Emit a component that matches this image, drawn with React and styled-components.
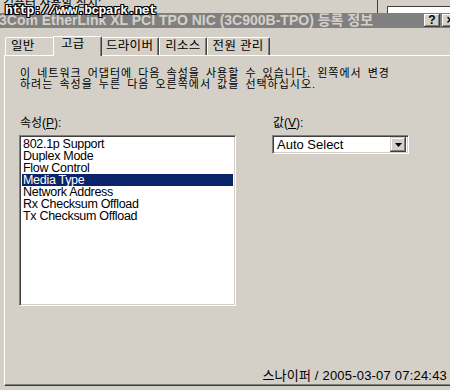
import React from "react";
import styled, { createGlobalStyle } from "styled-components";

const Global = createGlobalStyle`
  html, body { margin: 0; padding: 0; background: #d4d0c8; }
  body { font-family: "Liberation Sans", "Noto Sans CJK KR", sans-serif; }
`;

const KR = `"Liberation Sans", "Noto Sans CJK KR", sans-serif`;

const Screen = styled.div`
  position: relative;
  width: 450px;
  height: 390px;
  overflow: hidden;
  background: #d4d0c8;
  display: flex;
  flex-direction: column;
`;

const BackStrip = styled.div`
  height: 13px;
  position: relative;
  display: flex;
  align-items: flex-end;
  font-family: ${KR};
  font-size: 12px;
  color: #000;
  overflow: hidden;
`;

const BackLabel = styled.span`
  margin-left: 3px;
  line-height: 12px;
  transform: translateY(-4px);
`;

const BackFrame = styled.div`
  position: absolute;
  top: -2px;
  left: 377px;
  width: 100px;
  height: 20px;
  border-left: 1px solid #404040;
  &::after {
    content: "";
    position: absolute;
    left: 9px;
    top: 8px;
    width: 100px;
    height: 20px;
    border-left: 1px solid #404040;
    border-top: 1px solid #404040;
    background: #fff;
  }
`;

const Watermark = styled.div`
  position: absolute;
  left: 5px;
  top: 3px;
  font-family: "Liberation Mono", monospace;
  font-weight: bold;
  font-size: 13px;
  letter-spacing: -0.6px;
  color: #fff;
  text-shadow: 1px 0 0 #000, -1px 0 0 #000, 0 1px 0 #000, 0 -1px 0 #000,
    1px 1px 0 #000, -1px -1px 0 #000, 1px -1px 0 #000, -1px 1px 0 #000;
  z-index: 5;
`;

const TitleBar = styled.div`
  height: 15px;
  background: #808080;
  display: flex;
  align-items: center;
  justify-content: space-between;
`;

const TitleText = styled.span`
  font-family: "Liberation Sans", "Noto Sans CJK KR", sans-serif;
  font-weight: bold;
  font-size: 14px;
  letter-spacing: 0px;
  color: #d4d0c8;
  margin-left: -1px;
  white-space: nowrap;
  line-height: 15px;
`;

const TitleButtons = styled.div`
  display: flex;
  gap: 2px;
  margin-right: -8px;
`;

const CapButton = styled.div`
  width: 16px;
  height: 13px;
  background: #d4d0c8;
  box-shadow: inset -1px -1px 0 #404040, inset 1px 1px 0 #fff, inset -2px -2px 0 #808080;
  display: flex;
  align-items: center;
  justify-content: center;
  font-family: "Liberation Sans", sans-serif;
  font-weight: bold;
  font-size: 12px;
  color: #000;
  line-height: 13px;
`;

const TabStrip = styled.div`
  height: 27px;
  display: flex;
  align-items: flex-end;
  padding-left: 5px;
  position: relative;
  z-index: 1;
`;

const Tab = styled.div`
  box-sizing: border-box;
  height: ${(p) => (p.$active ? 20 : 18)}px;
  min-width: ${(p) => p.$min || 0}px;
  margin: 0 ${(p) => (p.$active ? -2 : 0)}px ${(p) => (p.$active ? -1 : 0)}px;
  padding: 0 5px 0 ${(p) => (p.$active ? 7 : 5)}px;
  border-left: 1px solid #fff;
  border-top: 1px solid #fff;
  border-right: 1px solid #404040;
  border-radius: 2px 2px 0 0;
  box-shadow: inset -1px 0 0 #808080;
  background: #d4d0c8;
  position: relative;
  z-index: ${(p) => (p.$active ? 2 : 1)};
  font-family: ${KR};
  font-size: 12.5px;
  letter-spacing: 0.3px;
  line-height: ${(p) => (p.$active ? 15 : 16)}px;
  color: #000;
  white-space: nowrap;
`;

const Panel = styled.div`
  height: 331px;
  box-sizing: border-box;
  margin-left: 4px;
  border-left: 1px solid #fff;
  border-top: 1px solid #fff;
  border-bottom: 1px solid #404040;
  box-shadow: inset 0 -1px 0 #808080;
  display: flex;
  flex-direction: column;
  padding: 12px 0 0 15px;
  font-family: ${KR};
  font-size: 12px;
  color: #000;
`;

const Description = styled.p`
  margin: 0;
  font-size: 11px;
  line-height: 11px;
  letter-spacing: 1px;
  word-spacing: 2px;
`;

const Columns = styled.div`
  margin-top: 27px;
  display: grid;
  grid-template-columns: 217px 137px;
  column-gap: 36px;
  margin-left: -1px;
`;

const Field = styled.div`
  display: flex;
  flex-direction: column;
`;

const Label = styled.div`
  line-height: 12px;
  margin: 0 0 6px 1px;
  u { text-decoration: underline; }
`;

const ListBox = styled.div`
  box-sizing: border-box;
  height: 171px;
  background: #fff;
  border-top: 1px solid #808080;
  border-left: 1px solid #808080;
  border-right: 1px solid #fff;
  border-bottom: 1px solid #fff;
  box-shadow: inset 1px 1px 0 #404040, inset -1px -1px 0 #d4d0c8;
  padding: 2px 2px 0 2px;
  display: flex;
  flex-direction: column;
`;

const Item = styled.div`
  height: 12px;
  line-height: 12px;
  padding-left: 1px;
  font-family: "Liberation Sans", sans-serif;
  font-size: 12.5px;
  letter-spacing: -0.3px;
  background: ${(p) => (p.$sel ? "#0a246a" : "transparent")};
  color: ${(p) => (p.$sel ? "#fff" : "#000")};
  white-space: nowrap;
  overflow: hidden;
`;

const Combo = styled.div`
  box-sizing: border-box;
  height: 19px;
  background: #fff;
  border-top: 1px solid #808080;
  border-left: 1px solid #808080;
  border-right: 1px solid #fff;
  border-bottom: 1px solid #fff;
  box-shadow: inset 1px 1px 0 #404040, inset -1px -1px 0 #d4d0c8;
  display: flex;
  align-items: center;
  padding: 2px;
`;

const ComboValue = styled.div`
  flex: 1;
  padding-left: 2px;
  font-family: "Liberation Sans", sans-serif;
  font-size: 13px;
  line-height: 13px;
`;

const DropButton = styled.div`
  width: 16px;
  height: 15px;
  box-sizing: border-box;
  background: #d4d0c8;
  box-shadow: inset -1px -1px 0 #404040, inset 1px 1px 0 #d4d0c8, inset -2px -2px 0 #808080, inset 2px 2px 0 #fff;
  display: flex;
  align-items: center;
  justify-content: center;
`;

const Footer = styled.div`
  margin-top: auto;
  margin-bottom: 3px;
  align-self: flex-end;
  margin-right: 3px;
  font-family: ${KR};
  font-size: 13px;
  line-height: 13px;
  color: #000;
  letter-spacing: 0.2px;
`;

const items = [
  "802.1p Support",
  "Duplex Mode",
  "Flow Control",
  "Media Type",
  "Network Address",
  "Rx Checksum Offload",
  "Tx Checksum Offload",
];

export default function App() {
  return (
    <>
      <Global />
      <Screen>
        <Watermark>http://www.bcpark.net</Watermark>
        <BackStrip>
          <BackLabel>컴퓨터 사용할 장치:</BackLabel>
          <BackFrame />
        </BackStrip>
        <TitleBar>
          <TitleText>3Com EtherLink XL PCI TPO NIC (3C900B-TPO) 등록 정보</TitleText>
          <TitleButtons>
            <CapButton>?</CapButton>
            <CapButton>×</CapButton>
          </TitleButtons>
        </TitleBar>
        <TabStrip>
          <Tab $min={50}>일반</Tab>
          <Tab $active $min={49}>고급</Tab>
          <Tab>드라이버</Tab>
          <Tab>리소스</Tab>
          <Tab>전원 관리</Tab>
        </TabStrip>
        <Panel>
          <Description>
            이 네트워크 어댑터에 다음 속성을 사용할 수 있습니다. 왼쪽에서 변경
            <br />
            하려는 속성을 누른 다음 오른쪽에서 값을 선택하십시오.
          </Description>
          <Columns>
            <Field>
              <Label>
                속성(<u>P</u>):
              </Label>
              <ListBox>
                {items.map((t) => (
                  <Item key={t} $sel={t === "Media Type"}>
                    {t}
                  </Item>
                ))}
              </ListBox>
            </Field>
            <Field>
              <Label>
                값(<u>V</u>):
              </Label>
              <Combo>
                <ComboValue>Auto Select</ComboValue>
                <DropButton>
                  <svg width="7" height="4" viewBox="0 0 7 4">
                    <path d="M0 0h7L3.5 4z" fill="#000" />
                  </svg>
                </DropButton>
              </Combo>
            </Field>
          </Columns>
          <Footer>스나이퍼 / 2005-03-07 07:24:43</Footer>
        </Panel>
      </Screen>
    </>
  );
}
